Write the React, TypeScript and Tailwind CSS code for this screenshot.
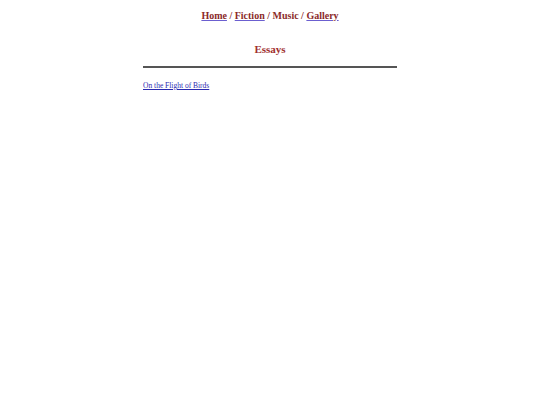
export default function App() {
  return (
    <div className="min-h-screen bg-white font-['Liberation_Serif',serif]">
      <nav className="pt-[9px] text-center text-[10px] font-bold leading-[14px] text-[#8b2a2a]">
        <a href="#" className="underline decoration-[#6b5fd0]">Home</a>
        <span> / </span>
        <a href="#" className="underline decoration-[#6b5fd0]">Fiction</a>
        <span> / </span>
        <span>Music</span>
        <span> / </span>
        <a href="#" className="underline decoration-[#6b5fd0]">Gallery</a>
      </nav>
      <main className="mx-auto w-[254px]">
        <h1 className="mt-[19px] text-center text-[11px] font-bold leading-[14px] text-[#a0302f]">Essays</h1>
        <hr className="mt-[10px] border-t-2 border-[#555]" />
        <div className="mt-[13px] text-[7.5px] leading-[10px]">
          <a href="#" className="text-[#2a2ab0] underline">On the Flight of Birds</a>
        </div>
      </main>
    </div>
  );
}
